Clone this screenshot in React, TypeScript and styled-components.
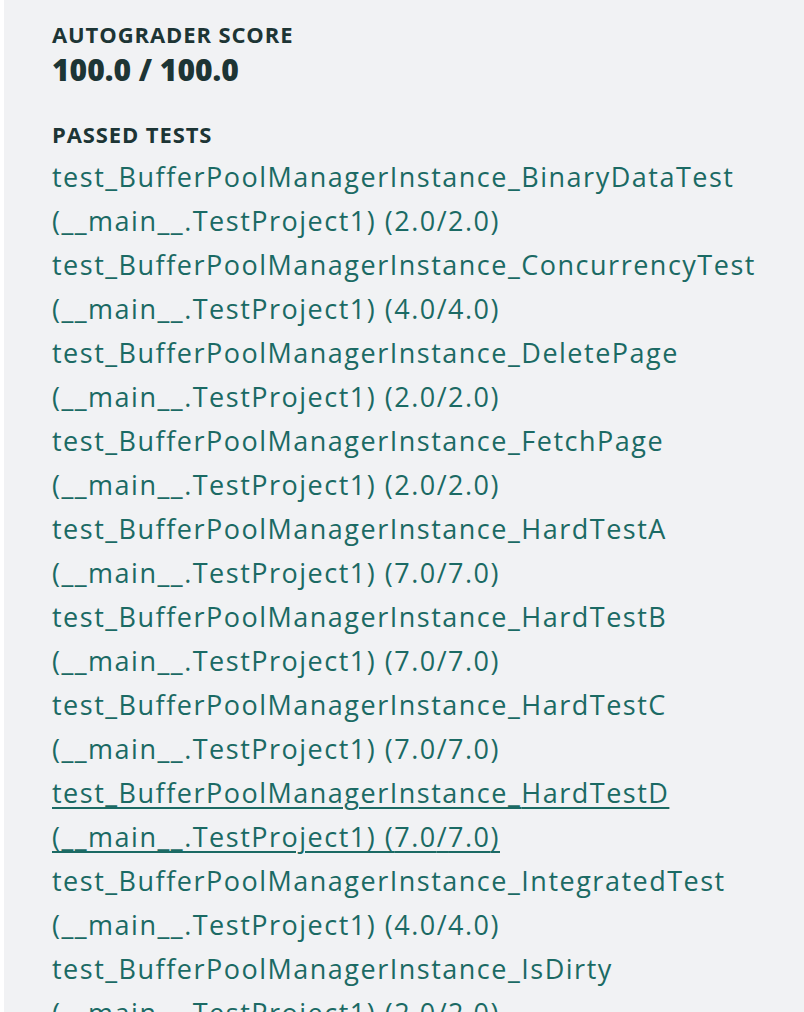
import styled, { createGlobalStyle } from "styled-components";

const GlobalStyle = createGlobalStyle`
  html, body {
    margin: 0;
    padding: 0;
    background: #ffffff;
  }
  body {
    font-family: "Open Sans", Lato, sans-serif;
  }
`;

const Panel = styled.div`
  margin-left: 4px;
  min-height: 1012px;
  background: #f1f2f4;
  padding: 20px 0 0 48px;
  box-sizing: border-box;
  overflow: hidden;
`;

const Section = styled.section`
  margin-bottom: 28px;
`;

const Label = styled.h3`
  margin: 0;
  font-size: 22px;
  font-weight: 700;
  letter-spacing: 0.9px;
  color: #1d3535;
  line-height: 28px;
`;

const Score = styled.div`
  font-size: 30px;
  font-weight: 800;
  color: #1d3535;
  line-height: 44px;
`;

const TestList = styled.ul`
  list-style: none;
  margin: 7px 0 0;
  padding: 0;
`;

const TestLink = styled.a<{ $hover?: boolean }>`
  display: block;
  font-size: 27px;
  letter-spacing: 1.5px;
  line-height: 44px;
  color: #1b6a64;
  text-decoration: ${(p) => (p.$hover ? "underline" : "none")};
  text-underline-offset: 4px;
  text-decoration-thickness: 2px;
  white-space: nowrap;
  cursor: pointer;
`;

type TestResult = {
  name: string;
  score: number;
  max: number;
};

const tests: TestResult[] = [
  { name: "BinaryDataTest", score: 2, max: 2 },
  { name: "ConcurrencyTest", score: 4, max: 4 },
  { name: "DeletePage", score: 2, max: 2 },
  { name: "FetchPage", score: 2, max: 2 },
  { name: "HardTestA", score: 7, max: 7 },
  { name: "HardTestB", score: 7, max: 7 },
  { name: "HardTestC", score: 7, max: 7 },
  { name: "HardTestD", score: 7, max: 7 },
  { name: "IntegratedTest", score: 4, max: 4 },
  { name: "IsDirty", score: 2, max: 2 },
];

export default function App() {
  return (
    <>
      <GlobalStyle />
      <Panel>
        <Section>
          <Label>AUTOGRADER SCORE</Label>
          <Score>100.0 / 100.0</Score>
        </Section>
        <Label>PASSED TESTS</Label>
        <TestList>
          {tests.map((t) => (
            <li key={t.name}>
              <TestLink $hover={t.name === "HardTestD"}>
                test_BufferPoolManagerInstance_{t.name}
                <br />
                (__main__.TestProject1) ({t.score.toFixed(1)}/{t.max.toFixed(1)})
              </TestLink>
            </li>
          ))}
        </TestList>
      </Panel>
    </>
  );
}
